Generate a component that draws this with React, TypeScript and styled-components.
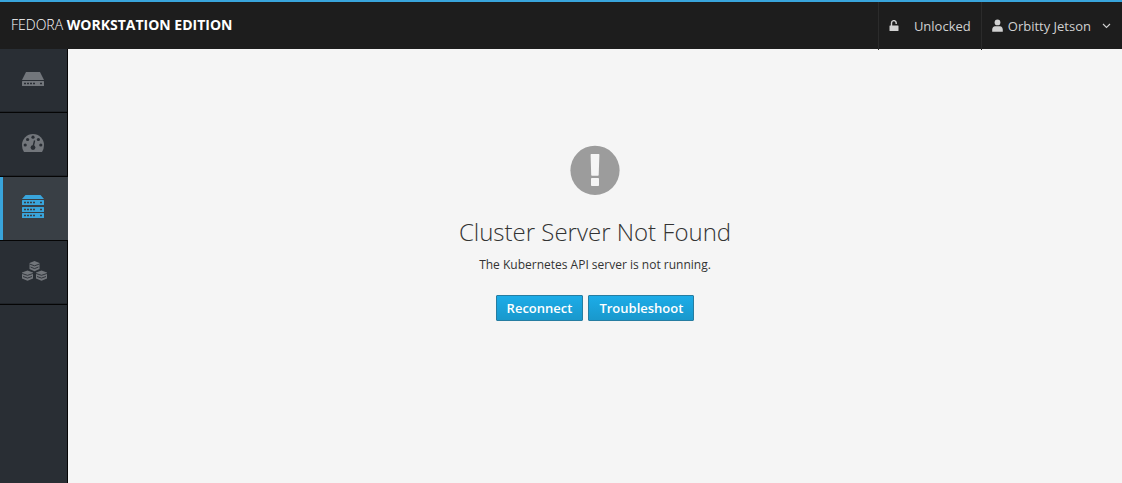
import React from 'react';
import styled, { createGlobalStyle } from 'styled-components';

const GlobalStyle = createGlobalStyle`
  *, *::before, *::after { box-sizing: border-box; }
  body {
    margin: 0;
    background: #f5f5f5;
    color: #333;
    font-family: "Open Sans", "Liberation Sans", sans-serif;
    font-size: 12px;
  }
`;

const Page = styled.div`
  display: flex;
  flex-direction: column;
  min-height: 100vh;
`;

const TopBar = styled.header`
  display: flex;
  justify-content: space-between;
  height: 49px;
  border-top: 2px solid #39a5dc;
  background: #1d1d1d;
`;

const Brand = styled.a`
  padding: 13px 11px;
  color: #fff;
  font-size: 14px;
  font-weight: 300;
  line-height: 20px;
  text-decoration: none;
  text-transform: uppercase;

  strong { font-weight: 700; }
`;

const Tools = styled.div`
  display: flex;
  height: 48px;
  padding-right: 1px;
`;

const ToolButton = styled.button<{ $gap: number }>`
  display: flex;
  align-items: center;
  gap: ${({ $gap }) => $gap}px;
  padding: 0 10px;
  border: 0;
  border-left: 1px solid #2b2b2b;
  background: none;
  color: #d1d1d1;
  font: 400 13px/20px "Open Sans", "Liberation Sans", sans-serif;
  cursor: pointer;

  svg { display: block; flex: none; }
`;

const Caret = styled.span`
  padding-left: 6px;
`;

const Body = styled.div`
  display: flex;
  flex: 1;
`;

const Sidebar = styled.nav`
  flex: none;
  width: 68px;
  border-right: 1px solid #050505;
  background: #292e34;
`;

const NavItem = styled.a<{ $active?: boolean }>`
  display: flex;
  align-items: center;
  height: 64px;
  margin-right: ${({ $active }) => ($active ? '-1px' : '0')};
  padding: 0 0 4px 22px;
  border-bottom: 1px solid #050505;
  background: ${({ $active }) => ($active ? '#393f45' : '#292e34')};
  box-shadow: ${({ $active }) => ($active ? 'inset 3px 0 #39a5dc' : 'inset 0 -1px #202429')};
  color: ${({ $active }) => ($active ? '#39a5dc' : '#72767b')};

  svg { display: block; }
`;

const Main = styled.main`
  display: flex;
  flex: 1;
  flex-direction: column;
  align-items: center;
  padding: 96px 20px 20px;
  text-align: center;
`;

const Title = styled.h1`
  margin: 20px 0 0;
  font-size: 24px;
  font-weight: 300;
  line-height: 34px;
`;

const Message = styled.p`
  margin: 6px 0 0;
  line-height: 20px;
`;

const Actions = styled.div`
  display: flex;
  gap: 5px;
  margin-top: 20px;
`;

const PrimaryButton = styled.button`
  height: 26px;
  padding: 0 10px;
  border: 1px solid #267da1;
  border-radius: 1px;
  background: linear-gradient(#1cace8, #1998cc);
  color: #fff;
  font: 600 13px/20px "Open Sans", "Liberation Sans", sans-serif;
  cursor: pointer;
`;

const LockIcon = () => (
  <svg width="10" height="12" viewBox="0 0 10 12" aria-hidden="true">
    <rect x="0.5" y="5.6" width="9" height="5.4" rx="0.5" fill="currentColor" />
    <path d="M2.5 6V3.1A2.3 2.3 0 0 1 7.2 2.9V4" fill="none" stroke="currentColor" strokeWidth="1.4" />
  </svg>
);

const UserIcon = () => (
  <svg width="11" height="14" viewBox="0 0 11 14" aria-hidden="true">
    <circle cx="5.5" cy="3.4" r="2.9" fill="currentColor" />
    <path d="M0.2 12.8V10.8C0.2 8.6 1.5 7.2 3 7.2H8C9.6 7.2 10.8 8.8 10.8 10.8V12.8Z" fill="currentColor" />
  </svg>
);

const ChevronIcon = () => (
  <svg width="9" height="6" viewBox="0 0 9 6" aria-hidden="true">
    <path d="M1 1L4.5 4.5L8 1" fill="none" stroke="currentColor" strokeWidth="1.1" />
  </svg>
);

const HostIcon = () => (
  <svg width="22" height="14" viewBox="0 0 22 14" aria-hidden="true">
    <path d="M4 0H18L22 8H0Z" fill="currentColor" />
    <path d="M0 8.5H22" stroke="#292e34" strokeOpacity="0.5" />
    <rect y="9" width="22" height="5" rx="0.5" fill="currentColor" />
    <path d="M2 11.5H4M5 11.5H7M8 11.5H10M11 11.5H13M18 11.5H20" stroke="#292e34" strokeWidth="1.6" />
  </svg>
);

const GaugeIcon = () => (
  <svg width="22" height="18" viewBox="0 0 22 18" aria-hidden="true">
    <path d="M2 18Q0 15 0 11A11 11 0 0 1 22 11Q22 15 20 18Z" fill="currentColor" />
    <g fill="#292e34">
      <circle cx="3.2" cy="11" r="1.6" />
      <circle cx="5.6" cy="5.5" r="1.6" />
      <circle cx="11" cy="3.2" r="1.6" />
      <circle cx="16.4" cy="5.5" r="1.6" />
      <circle cx="18.8" cy="11" r="1.6" />
      <circle cx="11" cy="13.6" r="2.4" />
    </g>
    <path d="M11 13L12.6 6.5" stroke="#292e34" strokeWidth="1.4" />
  </svg>
);

const ClusterIcon = () => (
  <svg width="22" height="23" viewBox="0 0 22 23" aria-hidden="true">
    <path d="M3.5 0H18.5L22 4H0Z" fill="currentColor" />
    {[5, 12, 18].map((y) => (
      <g key={y}>
        <rect y={y} width="22" height="5" rx="0.5" fill="currentColor" />
        <path
          d={`M2 ${y + 2.5}H4M5 ${y + 2.5}H7M8 ${y + 2.5}H10M11 ${y + 2.5}H13M18 ${y + 2.5}H20`}
          stroke="#393f45"
          strokeWidth="1.6"
        />
      </g>
    ))}
  </svg>
);

const stacks = [
  { x: 7.5, y: 0, w: 10 },
  { x: 0, y: 9.5, w: 11 },
  { x: 14, y: 9.5, w: 11 },
];

const ContainersIcon = () => (
  <svg width="25" height="20" viewBox="0 0 25 20" aria-hidden="true">
    {stacks.map(({ x, y, w }) => (
      <g key={x} transform={`translate(${x} ${y})`}>
        <path d={`M0 2L${w / 2} 0L${w} 2V8L${w / 2} 10.3L0 8Z`} fill="currentColor" />
        <path
          d={`M0 3L${w / 2} 4.8L${w} 3M1 6L${w / 2} 7.6L${w - 1} 6`}
          fill="none"
          stroke="#292e34"
          strokeWidth="0.9"
        />
      </g>
    ))}
  </svg>
);

const AlertIcon = () => (
  <svg width="50" height="50" viewBox="0 0 50 50" aria-hidden="true">
    <circle cx="25" cy="25.3" r="24.6" fill="#9c9c9c" />
    <path
      d="M21.2 9H28.8Q29.5 9 29.4 9.8L28.7 30Q28.7 30.8 28 30.8H22Q21.2 30.8 21.2 30L20.6 9.8Q20.6 9 21.2 9Z"
      fill="#f5f5f5"
    />
    <rect x="21" y="33" width="8" height="8" rx="0.8" fill="#f5f5f5" />
  </svg>
);

const navItems = [
  { label: 'Host', Icon: HostIcon },
  { label: 'Dashboard', Icon: GaugeIcon },
  { label: 'Cluster', Icon: ClusterIcon, active: true },
  { label: 'Containers', Icon: ContainersIcon },
];

export default function App() {
  return (
    <Page>
      <GlobalStyle />
      <TopBar>
        <Brand href="#">
          Fedora <strong>Workstation Edition</strong>
        </Brand>
        <Tools>
          <ToolButton type="button" $gap={15}>
            <LockIcon />
            Unlocked
          </ToolButton>
          <ToolButton type="button" $gap={5}>
            <UserIcon />
            Orbitty Jetson
            <Caret>
              <ChevronIcon />
            </Caret>
          </ToolButton>
        </Tools>
      </TopBar>
      <Body>
        <Sidebar aria-label="Main">
          {navItems.map(({ label, Icon, active }) => (
            <NavItem
              key={label}
              href="#"
              aria-label={label}
              aria-current={active ? 'page' : undefined}
              $active={active}
            >
              <Icon />
            </NavItem>
          ))}
        </Sidebar>
        <Main>
          <AlertIcon />
          <Title>Cluster Server Not Found</Title>
          <Message>The Kubernetes API server is not running.</Message>
          <Actions>
            <PrimaryButton type="button">Reconnect</PrimaryButton>
            <PrimaryButton type="button">Troubleshoot</PrimaryButton>
          </Actions>
        </Main>
      </Body>
    </Page>
  );
}
